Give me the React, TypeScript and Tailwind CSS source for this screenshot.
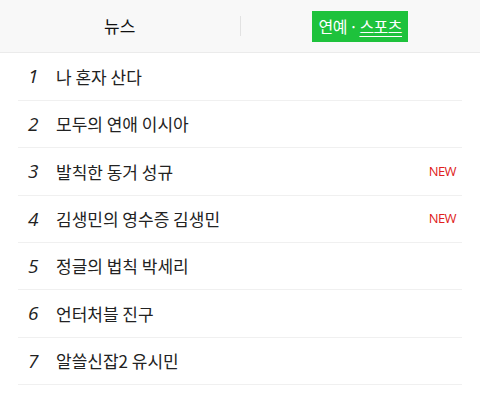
export default function App() {
    const items = [
        { rank: 1, title: '나 혼자 산다', isNew: false },
        { rank: 2, title: '모두의 연애 이시아', isNew: false },
        { rank: 3, title: '발칙한 동거 성규', isNew: true },
        { rank: 4, title: '김생민의 영수증 김생민', isNew: true },
        { rank: 5, title: '정글의 법칙 박세리', isNew: false },
        { rank: 6, title: '언터처블 진구', isNew: false },
        { rank: 7, title: '알쓸신잡2 유시민', isNew: false },
    ];

    return (
        <div className="w-[480px] h-[398px] bg-white overflow-hidden" style={{ fontFamily: '"Noto Sans CJK KR", "Noto Sans", sans-serif' }}>
            <div className="h-[53px] bg-[#f8f8f8] border-b border-[#ebebeb] flex items-center">
                <div className="flex-1 flex justify-center text-[17px] text-[#111]">뉴스</div>
                <div className="w-px h-[20px] bg-[#e2e2e2]" />
                <div className="flex-1 flex justify-center">
                    <div className="h-[31px] w-[96px] bg-[#1ec23c] text-white text-[16px] tracking-[-0.5px] flex items-center justify-center">
                        연예<span className="mx-[2px]">·</span><span className="underline underline-offset-[3px]">스포츠</span>
                    </div>
                </div>
            </div>
            <ul className="px-[18px]">
                {items.map(item => (
                    <li key={item.rank} className="h-[47.33px] first:h-[48px] border-b border-[#f0f0f0] flex items-center">
                        <span className="w-[38px] pl-[10px] text-[19px] italic text-[#222]" style={{ fontFamily: '"Open Sans", sans-serif' }}>{item.rank}</span>
                        <span className="flex-1 text-[17px] text-[#222]">{item.title}</span>
                        {item.isNew && (
                            <span className="text-[13px] font-medium text-[#e02020] tracking-[-0.6px] pr-[6px]" style={{ fontFamily: '"Open Sans", sans-serif' }}>NEW</span>
                        )}
                    </li>
                ))}
            </ul>
        </div>
    );
}
